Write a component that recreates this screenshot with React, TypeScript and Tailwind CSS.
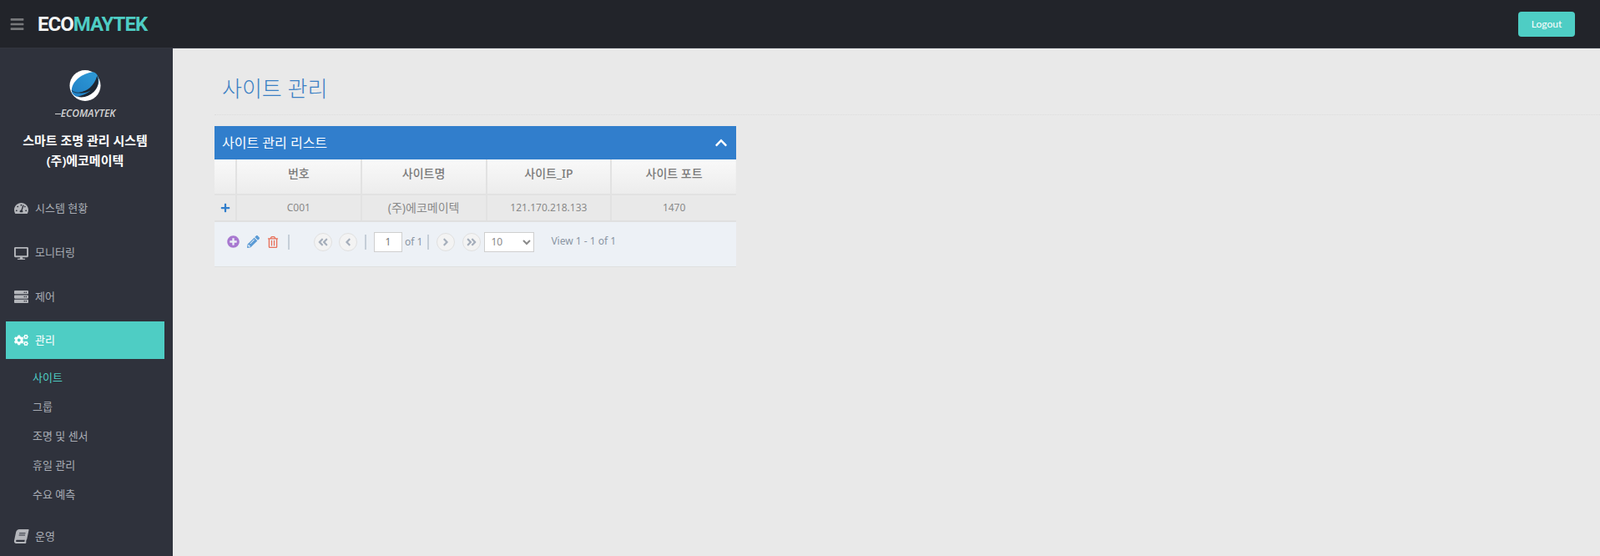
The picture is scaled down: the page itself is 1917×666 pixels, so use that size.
import { FaBars, FaBook, FaCogs, FaDesktop, FaServer, FaTachometerAlt, FaChevronUp, FaPlus, FaPlusCircle, FaPencilAlt, FaRegTrashAlt, FaAngleDoubleLeft, FaAngleDoubleRight, FaAngleLeft, FaAngleRight } from 'react-icons/fa'

const subMenu = ['사이트', '그룹', '조명 및 센서', '휴일 관리', '수요 예측']
const columns = ['번호', '사이트명', '사이트_IP', '사이트 포트']
const row = [
  { value: 'C001', size: 'text-[12px]' },
  { value: '(주)에코메이텍', size: 'text-[14px]' },
  { value: '121.170.218.133', size: 'text-[12px]' },
  { value: '1470', size: 'text-[12px]' },
]

function PageButton({ children }: { children: React.ReactNode }) {
  return (
    <button className="w-[22px] h-[22px] rounded-full border border-[#e0e0e0] bg-[#f3f3f3] flex items-center justify-center text-[#a5aebb] text-[14px]">
      {children}
    </button>
  )
}

function Divider() {
  return <span className="block w-[2px] h-[18px] bg-[#c5ced8]" />
}

function MenuItem({ icon, label, className = '' }: { icon: React.ReactNode; label: string; className?: string }) {
  return (
    <div className={`flex items-center text-[13px] text-[#a9adb5] ${className}`}>
      <span className="w-[17px] flex justify-center text-[17px] text-[#b4b6bb]">{icon}</span>
      <span className="ml-[8px]">{label}</span>
    </div>
  )
}

function Logo() {
  return (
    <svg width="38" height="39" viewBox="0 0 40 40">
      <defs>
        <linearGradient id="globe" x1="0" y1="1" x2="1" y2="0">
          <stop offset="0" stopColor="#1f7fc4" />
          <stop offset="1" stopColor="#2f9bd8" />
        </linearGradient>
      </defs>
      <circle cx="20" cy="20" r="19.5" fill="#ffffff" />
      <path d="M3 26 C3 14 18 4 30 3 C35 4 38 10 37 17 C34 28 20 35 10 34 C6 33 3 30 3 26 Z" fill="url(#globe)" />
      <path d="M12 29 C22 28 32 20 35 8 C38 14 37 22 31 28 C25 34 17 36 10 34 C14 33 22 31 27 26 C22 29 16 30 12 29 Z" fill="#1d2733" />
      <path d="M3 26 C7 30 14 30 20 27" stroke="#1d2733" strokeWidth="0.8" fill="none" />
    </svg>
  )
}

export default function App() {
  return (
    <div className="h-[666px] w-[1917px] overflow-hidden flex flex-col bg-[#e9e9e9] font-['Noto_Sans','Noto_Sans_CJK_KR',sans-serif]">
      {/* Header */}
      <header className="h-[58px] shrink-0 bg-[#22242a] border-b border-[#33353e] flex items-center pl-[12px] pr-[30px]">
        <FaBars className="text-[#77787b] text-[18px] w-[17px]" />
        <div className="ml-[16px] text-[24px] font-bold tracking-[-1px] font-['Roboto',sans-serif]">
          <span className="text-[#f4f4f4]">ECO</span>
          <span className="text-[#4ecdc4]">MAYTEK</span>
        </div>
        <button className="ml-auto w-[68px] h-[30px] rounded-[4px] bg-[#4ecdc4] text-white text-[12px] font-['Lato',sans-serif]">
          Logout
        </button>
      </header>

      <div className="flex flex-1 min-h-0">
        {/* Sidebar */}
        <aside className="w-[207px] shrink-0 bg-[#2f323c]">
          <div className="w-[204px] flex flex-col items-center pt-[25px]">
            <Logo />
            <div className="mt-[6px] flex items-center">
              <span className="w-[7px] h-[1px] bg-[#d4d4d4]" />
              <span className="text-[12px] leading-[16px] italic font-semibold text-[#d4d4d4] font-['Open_Sans',sans-serif]">ECOMAYTEK</span>
            </div>
            <div className="mt-[12px] text-[15px] leading-[24px] font-semibold text-white text-center">
              <div>스마트 조명 관리 시스템</div>
              <div>(주)에코메이텍</div>
            </div>
          </div>

          <nav className="mt-[19px] flex flex-col">
            <MenuItem icon={<FaTachometerAlt />} label="시스템 현황" className="h-[53px] pl-[17px]" />
            <MenuItem icon={<FaDesktop />} label="모니터링" className="h-[54px] pl-[17px]" />
            <MenuItem icon={<FaServer />} label="제어" className="h-[51px] pl-[17px]" />
            <div className="ml-[7px] mr-[10px] h-[45px] mt-[4px] bg-[#4ecdc4]">
              <MenuItem icon={<FaCogs />} label="관리" className="h-full pl-[10px] !text-white [&>span:first-child]:text-white" />
            </div>
            <ul className="mt-[5px] pl-[39px] text-[13px] text-[#a9adb5]">
              {subMenu.map((item, i) => (
                <li key={item} className={`h-[35px] flex items-center ${i === 0 ? 'text-[#4ecdc4]' : ''}`}>
                  {item}
                </li>
              ))}
            </ul>
            <MenuItem icon={<FaBook className="-skew-x-12" />} label="운영" className="h-[45px] mt-[10px] pl-[17px]" />
          </nav>
        </aside>

        {/* Content */}
        <main className="flex-1 pl-[50px]">
          <h1 className="ml-[9px] mt-[30px] text-[26px] leading-[36px] font-light text-[#3a80c4]">사이트 관리</h1>
          <div className="mt-[13px] h-[1px] border-t border-dotted border-[#dcdcdc]" />
          <section className="mt-[13px] w-[625px]">
            <div className="h-[40px] bg-[#317ecc] flex items-center justify-between pl-[9px] pr-[10px] text-white">
              <span className="text-[16px]">사이트 관리 리스트</span>
              <FaChevronUp className="text-[16px]" />
            </div>
            <table className="w-full table-fixed border-collapse text-center">
              <thead>
                <tr className="h-[42px] bg-gradient-to-b from-[#f9f9f9] to-[#ececec] text-[#7a7a7a] text-[14px]">
                  <th className="w-[26px] border-r-2 border-b-2 border-[#e2e2e2]" />
                  {columns.map((c) => (
                    <th key={c} className="font-medium pb-[8px] border-r-2 last:border-r-0 border-b-2 border-[#e2e2e2]">
                      {c}
                    </th>
                  ))}
                </tr>
              </thead>
              <tbody>
                <tr className="h-[31px] text-[#8a8a8a]">
                  <td className="border-r-2 border-[#e2e2e2]">
                    <FaPlus className="text-[#317ecc] text-[12px] mx-auto" />
                  </td>
                  {row.map((v) => (
                    <td key={v.value} className={`pb-[1px] border-r-2 last:border-r-0 border-[#e2e2e2] ${v.size}`}>
                      {v.value}
                    </td>
                  ))}
                </tr>
              </tbody>
            </table>
            <div className="h-[56px] bg-[#edf1f6] border-t-2 border-b border-[#e0e0e0] flex items-center pl-[15px] pb-[6px] text-[12px] text-[#8a95a3]">
              <FaPlusCircle className="text-[#a878d0] text-[15px]" />
              <FaPencilAlt className="ml-[9px] text-[#5b9bd5] text-[15px]" />
              <FaRegTrashAlt className="ml-[9px] text-[#e8705a] text-[14px]" />
              <span className="ml-[11px]"><Divider /></span>
              <div className="ml-[29px] flex items-center">
                <PageButton><FaAngleDoubleLeft /></PageButton>
                <span className="ml-[8px]"><PageButton><FaAngleLeft /></PageButton></span>
                <span className="ml-[9px]"><Divider /></span>
                <input
                  readOnly
                  value="1"
                  className="ml-[9px] w-[34px] h-[24px] bg-white border border-[#cfcfcf] text-center text-[12px] text-[#777]"
                />
                <span className="ml-[3px]">of 1</span>
                <span className="ml-[6px]"><Divider /></span>
                <span className="ml-[9px]"><PageButton><FaAngleRight /></PageButton></span>
                <span className="ml-[9px]"><PageButton><FaAngleDoubleRight /></PageButton></span>
                <select className="ml-[4px] w-[60px] h-[24px] bg-white border border-[#cfcfcf] text-[12px] text-[#8a8a8a] pl-[3px]">
                  <option>10</option>
                </select>
                <span className="ml-[20px] mb-[2px]">View 1 - 1 of 1</span>
              </div>
            </div>
          </section>
        </main>
      </div>
    </div>
  )
}
